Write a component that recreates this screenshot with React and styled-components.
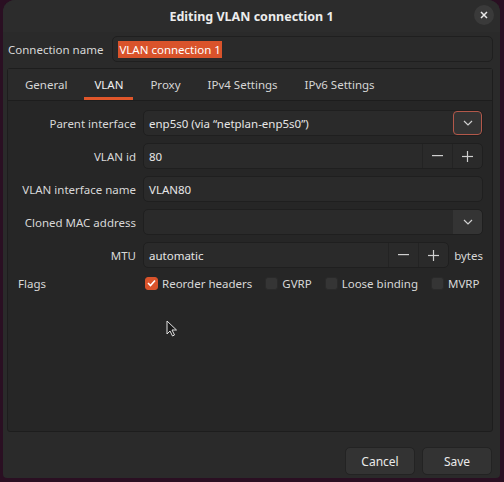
import React from "react";
import styled, { createGlobalStyle } from "styled-components";

const GlobalStyle = createGlobalStyle`
  html, body {
    margin: 0;
    height: 100%;
    background: #2a0f22;
    font-family: "Noto Sans", "DejaVu Sans", sans-serif;
    font-size: 11.5px;
    color: #e6e6e6;
  }
  #root { height: 100%; }
`;

const Window = styled.div`
  position: relative;
  margin-left: 3px;
  width: 497px;
  height: 478px;
  background: #2a2a2a;
  border-radius: 12px 12px 4px 4px;
  display: flex;
  flex-direction: column;
  overflow: hidden;
`;

const HeaderBar = styled.header`
  position: relative;
  height: 32px;
  flex: none;
  background: #2c2c2c;
  display: flex;
  align-items: center;
  justify-content: center;
`;

const Title = styled.h1`
  margin: 0;
  font-size: 12.5px;
  font-weight: 700;
  color: #ececec;
`;

const CloseButton = styled.button`
  position: absolute;
  right: 6px;
  top: 5px;
  width: 20px;
  height: 20px;
  border: none;
  border-radius: 50%;
  background: #3a3a3a;
  display: flex;
  align-items: center;
  justify-content: center;
  padding: 0;
`;

const NameRow = styled.div`
  display: flex;
  align-items: center;
  gap: 9px;
  padding: 4px 7px 0 5px;
`;

const Label = styled.label`
  color: #d8d8d8;
  white-space: nowrap;
  text-align: ${(p) => (p.$left ? "left" : "right")};
`;

const Entry = styled.div`
  flex: 1;
  min-width: 0;
  height: 26px;
  box-sizing: border-box;
  background: #2a2a2a;
  border: 1px solid #1f1f1f;
  border-radius: 5px;
  display: flex;
  align-items: center;
  padding-left: 5px;
  color: #e6e6e6;
  overflow: hidden;
  white-space: nowrap;
`;

const Selected = styled.span`
  background: #d9532b;
  color: #fff;
  padding: 1px 1px;
`;

const Notebook = styled.section`
  margin: 6px 7px 0 4px;
  height: 364px;
  box-sizing: border-box;
  border: 1px solid #1d1d1d;
  border-radius: 3px;
  background: #262626;
  display: flex;
  flex-direction: column;
`;

const TabBar = styled.nav`
  height: 31px;
  flex: none;
  display: flex;
  gap: 7px;
  padding-left: 7px;
  border-bottom: 1px solid #1d1d1d;
  background: #2a2a2a;
`;

const Tab = styled.div`
  padding: 0 10px;
  display: flex;
  align-items: center;
  color: ${(p) => (p.$active ? "#f0f0f0" : "#d6d6d6")};
  box-shadow: ${(p) => (p.$active ? "inset 0 -3px 0 #e0562a" : "none")};
`;

const Form = styled.div`
  display: grid;
  grid-template-columns: 118px minmax(0, 1fr);
  column-gap: 7px;
  row-gap: 7px;
  padding: 9px 9px 0 10px;
  align-items: center;
`;

const Field = styled.div`
  display: flex;
  align-items: center;
  gap: 5px;
`;

const Combo = styled(Entry)`
  padding-right: 0;
`;

const ComboText = styled.span`
  flex: 1;
`;

const DropButton = styled.div`
  width: 29px;
  height: 100%;
  box-sizing: border-box;
  background: #343434;
  display: flex;
  align-items: center;
  justify-content: center;
  border-radius: 0 4px 4px 0;
  ${(p) => p.$focus && "border: 1.5px solid #b3584a; border-radius: 4px;"}
`;

const SpinButton = styled.div`
  width: 29px;
  height: 100%;
  border-left: 1px solid #232323;
  display: flex;
  align-items: center;
  justify-content: center;
  color: #cfcfcf;
`;

const Unit = styled.span`
  color: #d8d8d8;
`;

const Flags = styled.div`
  display: flex;
  align-items: center;
  height: 16px;
  padding-left: 2px;
  white-space: nowrap;
`;

const Check = styled.label`
  display: flex;
  align-items: center;
  gap: 4px;
  margin-right: 13px;
  color: #d8d8d8;
`;

const Box = styled.span`
  width: 13px;
  height: 13px;
  flex: none;
  border-radius: 3px;
  box-sizing: border-box;
  background: ${(p) => (p.$on ? "#d9532b" : "#353535")};
  border: 1px solid ${(p) => (p.$on ? "#d9532b" : "#2a2a2a")};
  display: flex;
  align-items: center;
  justify-content: center;
`;

const Footer = styled.footer`
  display: flex;
  justify-content: flex-end;
  gap: 7px;
  padding: 15px 8px 0 0;
`;

const Button = styled.button`
  width: 70px;
  height: 28px;
  border: 1px solid #232323;
  border-radius: 5px;
  background: #333333;
  color: #eaeaea;
  font: inherit;
  font-size: 12px;
`;

const Pointer = styled.svg`
  position: absolute;
  left: 163px;
  top: 320px;
`;

const Chevron = () => (
  <svg width="10" height="6" viewBox="0 0 10 6">
    <path d="M1 1l4 4 4-4" fill="none" stroke="#cfcfcf" strokeWidth="1.2" />
  </svg>
);

const Tick = () => (
  <svg width="9" height="8" viewBox="0 0 9 8">
    <path d="M1 4l2.5 2.5L8 1.5" fill="none" stroke="#fff" strokeWidth="1.6" />
  </svg>
);

const Minus = () => (
  <svg width="11" height="2" viewBox="0 0 11 2">
    <rect width="11" height="1.2" fill="#cfcfcf" />
  </svg>
);

const Plus = () => (
  <svg width="11" height="11" viewBox="0 0 11 11">
    <rect y="4.9" width="11" height="1.2" fill="#cfcfcf" />
    <rect x="4.9" width="1.2" height="11" fill="#cfcfcf" />
  </svg>
);

const flags = [
  ["Reorder headers", true],
  ["GVRP", false],
  ["Loose binding", false],
  ["MVRP", false],
];

export default function App() {
  return (
    <>
      <GlobalStyle />
      <Window>
        <HeaderBar>
          <Title>Editing VLAN connection 1</Title>
          <CloseButton aria-label="Close">
            <svg width="8" height="8" viewBox="0 0 8 8">
              <path d="M1 1l6 6M7 1L1 7" stroke="#e8e8e8" strokeWidth="1.5" />
            </svg>
          </CloseButton>
        </HeaderBar>

        <NameRow>
          <Label>Connection name</Label>
          <Entry>
            <Selected>VLAN connection 1</Selected>
          </Entry>
        </NameRow>

        <Notebook>
          <TabBar>
            <Tab>General</Tab>
            <Tab $active>VLAN</Tab>
            <Tab>Proxy</Tab>
            <Tab>IPv4 Settings</Tab>
            <Tab>IPv6 Settings</Tab>
          </TabBar>

          <Form>
            <Label>Parent interface</Label>
            <Combo>
              <ComboText>enp5s0 (via “netplan-enp5s0”)</ComboText>
              <DropButton $focus>
                <Chevron />
              </DropButton>
            </Combo>

            <Label>VLAN id</Label>
            <Combo>
              <ComboText>80</ComboText>
              <SpinButton>
                <Minus />
              </SpinButton>
              <SpinButton>
                <Plus />
              </SpinButton>
            </Combo>

            <Label>VLAN interface name</Label>
            <Entry>VLAN80</Entry>

            <Label>Cloned MAC address</Label>
            <Combo>
              <ComboText />
              <DropButton>
                <Chevron />
              </DropButton>
            </Combo>

            <Label>MTU</Label>
            <Field>
              <Combo>
                <ComboText>automatic</ComboText>
                <SpinButton>
                  <Minus />
                </SpinButton>
                <SpinButton>
                  <Plus />
                </SpinButton>
              </Combo>
              <Unit>bytes</Unit>
            </Field>

            <Label $left>Flags</Label>
            <Flags>
              {flags.map(([name, on]) => (
                <Check key={name}>
                  <Box $on={on}>{on && <Tick />}</Box>
                  {name}
                </Check>
              ))}
            </Flags>
          </Form>
        </Notebook>

        <Footer>
          <Button>Cancel</Button>
          <Button>Save</Button>
        </Footer>

        <Pointer width="12" height="18" viewBox="0 0 12 18">
          <path
            d="M1 1v13l3-3 2.5 5 2-1-2.5-5h4.5z"
            fill="#1a1a1a"
            stroke="#e0e0e0"
            strokeWidth="1"
          />
        </Pointer>
      </Window>
    </>
  );
}
